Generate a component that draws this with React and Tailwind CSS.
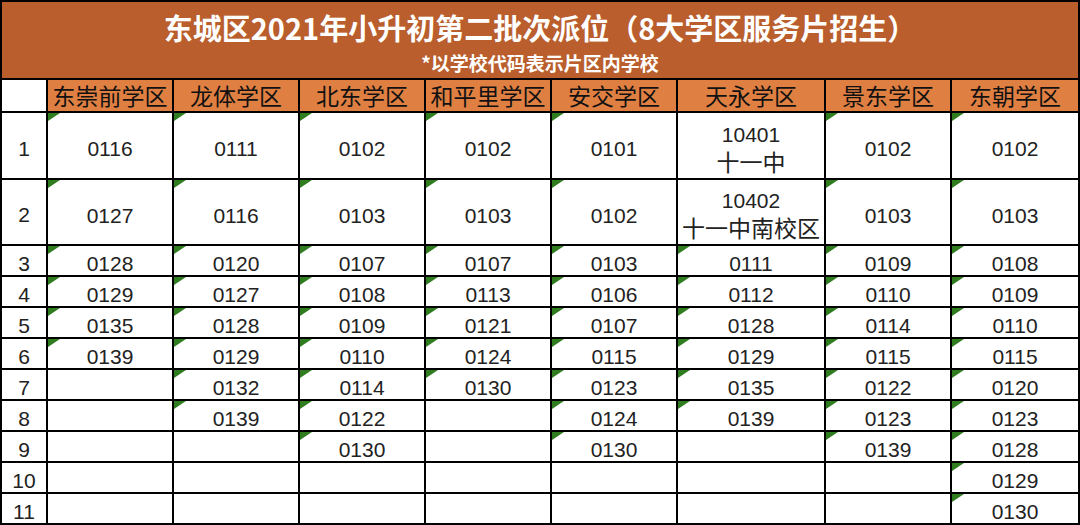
import React from "react";

const districts = [
  "东崇前学区",
  "龙体学区",
  "北东学区",
  "和平里学区",
  "安交学区",
  "天永学区",
  "景东学区",
  "东朝学区",
];

// each row: codes per district, "" = empty cell
const rows = [
  ["0116", "0111", "0102", "0102", "0101", "10401\n十一中", "0102", "0102"],
  ["0127", "0116", "0103", "0103", "0102", "10402\n十一中南校区", "0103", "0103"],
  ["0128", "0120", "0107", "0107", "0103", "0111", "0109", "0108"],
  ["0129", "0127", "0108", "0113", "0106", "0112", "0110", "0109"],
  ["0135", "0128", "0109", "0121", "0107", "0128", "0114", "0110"],
  ["0139", "0129", "0110", "0124", "0115", "0129", "0115", "0115"],
  ["", "0132", "0114", "0130", "0123", "0135", "0122", "0120"],
  ["", "0139", "0122", "", "0124", "0139", "0123", "0123"],
  ["", "", "0130", "", "0130", "", "0139", "0128"],
  ["", "", "", "", "", "", "", "0129"],
  ["", "", "", "", "", "", "", "0130"],
];

const rowHeights = [
  "h-[67px]",
  "h-[66px]",
  "h-[31px]",
  "h-[31px]",
  "h-[31px]",
  "h-[31px]",
  "h-[31px]",
  "h-[31px]",
  "h-[31px]",
  "h-[31px]",
  "h-[29px]",
];

function Corner() {
  return (
    <svg className="absolute left-0 top-0" width="12" height="8" viewBox="0 0 12 8">
      <polygon points="0,0 12,0 0,8" fill="#2f7d1f" />
    </svg>
  );
}

function Cell({ value, last, bottom, height }) {
  const lines = value.split("\n");
  const hasText = value !== "" && !value.includes("\n");
  return (
    <div
      className={`relative flex flex-col items-center justify-center ${height} border-black ${
        last ? "" : "border-r-2"
      } ${bottom ? "" : "border-b-2"}`}
    >
      {hasText && <Corner />}
      {lines.map((l, i) => (
        <span
          key={i}
          className={`relative top-[3px] leading-[29px] text-[#222] ${
            /^\d+$/.test(l) ? "text-[21px]" : "text-[23px]"
          }`}
        >
          {l}
        </span>
      ))}
    </div>
  );
}

export default function App() {
  return (
    <div className="w-[1080px] h-[525px] overflow-hidden bg-white border-2 border-black font-['Liberation_Sans','Noto_Sans_CJK_SC',sans-serif]">
      <div className="h-[78px] bg-[#b95e2c] border-b-2 border-black flex flex-col items-center font-['Noto_Sans_CJK_SC',sans-serif] text-white">
        <h1 className="mt-[7px] text-[29px] leading-[36px] font-bold">
          东城区2021年小升初第二批次派位（8大学区服务片招生）
        </h1>
        <p className="mt-[7px] text-[19px] leading-[22px] font-bold">*以学校代码表示片区内学校</p>
      </div>

      <div className="grid grid-cols-[46px_126px_126px_126px_126px_126px_148px_126px_126px]">
        <div className="h-[33px] border-r-2 border-b-2 border-black" />
        {districts.map((d, i) => (
          <div
            key={d}
            className={`h-[33px] flex items-center justify-center bg-[#e07f42] border-b-2 border-black ${
              i === districts.length - 1 ? "" : "border-r-2"
            } font-['Noto_Sans_CJK_SC',sans-serif] text-[23px] text-[#111]`}
          >
            {d}
          </div>
        ))}

        {rows.map((r, ri) => {
          const bottom = ri === rows.length - 1;
          return (
            <React.Fragment key={ri}>
              <div
                className={`${rowHeights[ri]} flex items-center justify-center border-r-2 border-black ${
                  bottom ? "" : "border-b-2"
                } text-[21px] text-[#222]`}
              >
                <span className="relative top-[3px]">{ri + 1}</span>
              </div>
              {r.map((v, ci) => (
                <Cell
                  key={ci}
                  value={v}
                  last={ci === r.length - 1}
                  bottom={bottom}
                  height={rowHeights[ri]}
                />
              ))}
            </React.Fragment>
          );
        })}
      </div>
    </div>
  );
}
